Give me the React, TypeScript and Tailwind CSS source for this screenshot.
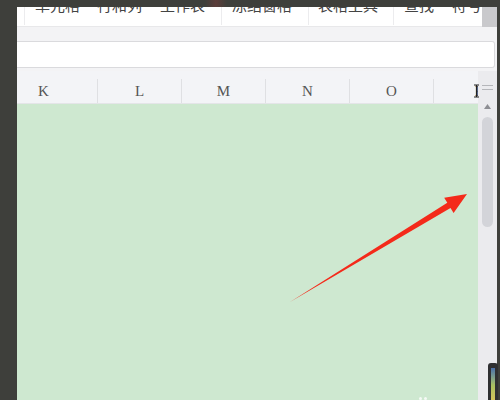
import React from 'react';

const ribbon = [
  { label: '单元格', ml: 'ml-[10px]' },
  { label: '行和列', ml: 'ml-[17px]' },
  { label: '工作表', ml: 'ml-[18px]' },
  { sep: true, ml: 'ml-[16px]' },
  { label: '冻结窗格', ml: 'ml-[10px]' },
  { sep: true, ml: 'ml-[16px]' },
  { label: '表格工具', ml: 'ml-[9px]' },
  { sep: true, ml: 'ml-[15px]' },
  { label: '查找', ml: 'ml-[10px]' },
  { label: '符号', ml: 'ml-[18px]' },
];

const cols = ['L', 'M', 'N', 'O'];

function RedArrow() {
  return (
    <svg className="absolute left-0 top-0 pointer-events-none" width="500" height="400" viewBox="0 0 500 400">
      <polygon
        points="290,302 450.5,208 453.6,213 467,194 444.2,197.8 447.3,202.8"
        fill="#f42a1a"
      />
    </svg>
  );
}

export default function App() {
  return (
    <div className="relative w-[500px] h-[400px] overflow-hidden bg-[#3e3f3b] flex font-['Noto_Sans_CJK_SC',sans-serif]">
      <div className="w-[17px] shrink-0" />

      <div className="w-[480px] shrink-0 flex flex-col pt-[7px]">
        {/* ribbon, cut off at the top */}
        <div className="h-[20px] flex">
          <div className="w-[465px] bg-white overflow-hidden border-b border-[#e8e8ea]">
            <div className="flex items-start h-[20px] pl-[7px]">
              <span className="w-px h-[18px] bg-[#ececee]" />
              {ribbon.map((r, i) =>
                r.sep ? (
                  <span key={i} className={`${r.ml} w-px h-[18px] bg-[#ececee]`} />
                ) : (
                  <span key={i} className={`${r.ml} text-[15px] leading-[15px] mt-[-10px] text-[#444] whitespace-nowrap`}>
                    {r.label}
                  </span>
                )
              )}
            </div>
          </div>
          <div className="w-[15px] bg-[#c9c9cc]" />
        </div>

        {/* toolbar gap + formula bar */}
        <div className="bg-[#f3f3f5] pt-[14px] pb-[3px] pr-[2px]">
          <div className="h-[27px] bg-white border border-[#dadadd] border-l-0 rounded-r-[3px]" />
        </div>

        {/* sheet */}
        <div className="flex-1 flex min-h-0">
          <div className="w-[461px] flex flex-col">
            <div className="h-[33px] bg-[#f3f4f7] flex items-end border-b border-[#e4e5e8]">
              <div className="h-[24px] flex w-full font-['Liberation_Serif',serif] text-[15px] text-[#555]">
                <div className="w-[81px] pl-[21px] flex items-center border-r border-[#dfe0e3]">K</div>
                {cols.map((c) => (
                  <div key={c} className="w-[84px] flex items-center justify-center border-r border-[#dfe0e3]">
                    {c}
                  </div>
                ))}
                <div className="flex-1 flex items-center justify-end overflow-hidden">
                  <span className="mr-[-5px]">P</span>
                </div>
              </div>
            </div>
            <div className="flex-1 bg-[#cee8d0]" />
          </div>

          <div className="w-[19px] bg-[#ebebee] flex flex-col items-center pt-[14px]">
            <div className="w-[11px] flex flex-col gap-[3px]">
              <span className="h-px bg-[#b5b6ba]" />
              <span className="h-px bg-[#b5b6ba]" />
            </div>
            <svg className="mt-[14px]" width="7" height="5" viewBox="0 0 7 5">
              <polygon points="3.5,0 7,5 0,5" fill="#8d8e93" />
            </svg>
            <div className="mt-[8px] w-[11px] h-[110px] rounded-full bg-[#d3d4d9]" />
          </div>
        </div>
      </div>

      <div className="w-[3px] shrink-0" />

      {/* faint red streak in the top bar */}
      <div className="absolute left-[205px] top-0 w-[22px] h-[7px] bg-gradient-to-r from-transparent via-[#6a3d3a] to-transparent opacity-70" />

      {/* text cursor */}
      <svg className="absolute left-[473px] top-[84px]" width="7" height="14" viewBox="0 0 7 14">
        <path d="M1 1h5M1 13h5M3.5 1v12" stroke="#222" strokeWidth="1.2" fill="none" />
      </svg>

      <RedArrow />

      {/* bottom right widget */}
      <div className="absolute left-[488px] top-[363px] w-[10px] h-[40px] rounded-t-[3px] bg-[#2f3032] flex justify-center pt-[5px]">
        <div className="w-[4px] h-[34px] bg-gradient-to-b from-[#4b6fa8] via-[#a8c060] to-[#d9c45a]" />
      </div>

      {/* dots at the bottom */}
      <div className="absolute left-[419px] top-[397px] w-[3px] h-[3px] rounded-full bg-white/80" />
      <div className="absolute left-[424px] top-[397px] w-[3px] h-[3px] rounded-full bg-white/80" />
    </div>
  );
}
